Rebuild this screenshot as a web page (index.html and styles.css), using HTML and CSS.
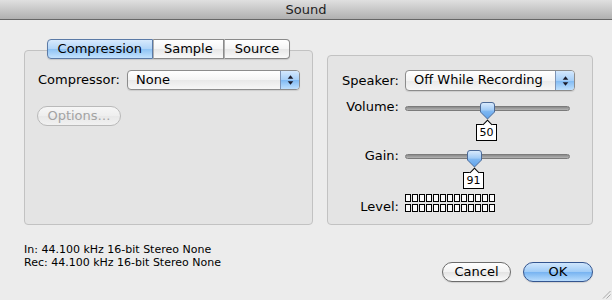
FILE: index.html
```html
<!DOCTYPE html>
<html>
<head>
<meta charset="utf-8">
<link rel="stylesheet" href="styles.css">
</head>
<body>
<div class="window">
  <div class="titlebar">Sound</div>
  <div class="content">
    <div class="panels">
      <div class="left-col">
        <div class="tabs">
          <span class="tab sel">Compression</span><span class="tab">Sample</span><span class="tab">Source</span>
        </div>
        <div class="group left-group">
          <div class="row">
            <span class="plain-label">Compressor:</span>
            <div class="popup popup-comp">
              <span class="popup-label">None</span>
              <span class="stepper"><svg width="7" height="12" viewBox="0 0 7 12"><path d="M3.5 1.2 L6.3 4.8 L0.7 4.8Z" fill="#1b1b2a"/><path d="M0.7 7.2 L6.3 7.2 L3.5 10.8Z" fill="#1b1b2a"/></svg></span>
            </div>
          </div>
          <div class="btn btn-disabled">Options…</div>
        </div>
      </div>
      <div class="group right-group">
        <div class="row">
          <span class="lbl">Speaker:</span>
          <div class="popup popup-speaker">
            <span class="popup-label">Off While Recording</span>
            <span class="stepper"><svg width="7" height="12" viewBox="0 0 7 12"><path d="M3.5 1.2 L6.3 4.8 L0.7 4.8Z" fill="#1b1b2a"/><path d="M0.7 7.2 L6.3 7.2 L3.5 10.8Z" fill="#1b1b2a"/></svg></span>
          </div>
        </div>
        <div class="row slider-row vol-row">
          <span class="lbl lbl-vol">Volume:</span>
          <div class="slider">
            <div class="track"></div>
            <svg class="thumb" style="left:75px" width="15" height="18" viewBox="0 0 15 18"><defs><linearGradient id="tg1" x1="0" y1="0" x2="0" y2="1"><stop offset="0" stop-color="#dcecfd"/><stop offset="0.45" stop-color="#a3ccf6"/><stop offset="0.55" stop-color="#7db6f1"/><stop offset="1" stop-color="#5fa2ea"/></linearGradient></defs><path d="M3 0.5 H12 Q14.5 0.5 14.5 3 V10 L7.5 17 L0.5 10 V3 Q0.5 0.5 3 0.5Z" fill="url(#tg1)" stroke="#4c6a97"/></svg>
            <div class="tag" style="left:71px"><span class="tag-text">50</span></div>
          </div>
        </div>
        <div class="row slider-row gain-row">
          <span class="lbl lbl-gain">Gain:</span>
          <div class="slider">
            <div class="track"></div>
            <svg class="thumb" style="left:62px" width="15" height="18" viewBox="0 0 15 18"><defs><linearGradient id="tg2" x1="0" y1="0" x2="0" y2="1"><stop offset="0" stop-color="#dcecfd"/><stop offset="0.45" stop-color="#a3ccf6"/><stop offset="0.55" stop-color="#7db6f1"/><stop offset="1" stop-color="#5fa2ea"/></linearGradient></defs><path d="M3 0.5 H12 Q14.5 0.5 14.5 3 V10 L7.5 17 L0.5 10 V3 Q0.5 0.5 3 0.5Z" fill="url(#tg2)" stroke="#4c6a97"/></svg>
            <div class="tag" style="left:58px"><span class="tag-text">91</span></div>
          </div>
        </div>
        <div class="row level-row">
          <span class="lbl lbl-level">Level:</span>
          <div class="meter">
            <span class="cell"></span><span class="cell"></span><span class="cell"></span><span class="cell"></span><span class="cell"></span><span class="cell"></span><span class="cell"></span><span class="cell"></span><span class="cell"></span><span class="cell"></span><span class="cell"></span><span class="cell"></span><span class="cell"></span>
            <span class="cell"></span><span class="cell"></span><span class="cell"></span><span class="cell"></span><span class="cell"></span><span class="cell"></span><span class="cell"></span><span class="cell"></span><span class="cell"></span><span class="cell"></span><span class="cell"></span><span class="cell"></span><span class="cell"></span>
          </div>
        </div>
      </div>
    </div>
    <div class="footer">
      <div class="info">In: 44.100 kHz 16-bit Stereo None<br>Rec: 44.100 kHz 16-bit Stereo None</div>
      <div class="buttons">
        <div class="btn btn-cancel">Cancel</div>
        <div class="btn btn-ok">OK</div>
      </div>
    </div>
  </div>
  <svg class="grip" width="10" height="10" viewBox="0 0 10 10"><path d="M9.5 2 L2 9.5 M9.5 5.5 L5.5 9.5" stroke="#a8a8a8" stroke-width="1"/></svg>
</div>
</body>
</html>
```

FILE: styles.css
```css
* { box-sizing: border-box; }
html, body { margin: 0; padding: 0; }
body {
  width: 612px;
  height: 300px;
  overflow: hidden;
  background: #ececec;
  font-family: "DejaVu Sans", sans-serif;
  font-size: 13px;
  color: #000;
}
.window { position: relative; height: 300px; }
.titlebar {
  height: 20px;
  background: linear-gradient(#e0e0e0, #b0b0b0);
  border-bottom: 1px solid #666666;
  text-align: center;
  line-height: 19px;
  color: #1e1e1e;
}
.content { padding: 19px 19px 0 24px; }
.panels { display: flex; gap: 14px; height: 186px; }
.left-col { width: 289px; display: flex; flex-direction: column; }
.tabs {
  align-self: center;
  display: flex;
  height: 20px;
  position: relative;
  z-index: 1;
  box-shadow: 0 1px 1px rgba(0,0,0,0.12);
  border-radius: 4px;
}
.tab {
  padding: 0 10px;
  line-height: 18px;
  border: 1px solid #8a8a8a;
  border-left: 1px solid #b0b0b0;
  background: linear-gradient(#ffffff, #f4f4f4 50%, #e7e7e7 52%, #f9f9f9);
}
.tab:first-child { border-left: 1px solid #8a8a8a; border-radius: 4px 0 0 4px; }
.tab:last-child { border-radius: 0 4px 4px 0; }
.tab.sel {
  background: linear-gradient(#d8eafd, #b0d4f8 50%, #8fc3f4 52%, #c4e3fe);
  border-color: #5b7aa6;
}
.group {
  border: 1px solid #c2c2c2;
  border-radius: 4px;
  background: #e4e4e4;
}
.left-group { flex: 1; margin-top: -9px; padding: 19px 12px 0 13px; }
.right-group { width: 266px; margin-top: 16px; padding: 14px 17px 0 13px; }
.row { display: flex; align-items: center; }
.plain-label { line-height: 14px; white-space: nowrap; }
.popup {
  display: flex;
  height: 20px;
  border: 1px solid #8c8c8c;
  border-radius: 4px;
  overflow: hidden;
  background: linear-gradient(#ffffff, #f4f4f4 50%, #e9e9e9 52%, #f7f7f7);
  box-shadow: 0 1px 1px rgba(0,0,0,0.1);
}
.popup-comp { width: 173px; margin-left: auto; }
.popup-speaker { width: 170px; height: 21px; }
.popup-label { flex: 1; padding-left: 8px; line-height: 18px; white-space: nowrap; }
.stepper {
  width: 19px;
  border-left: 1px solid #7d93b5;
  background: linear-gradient(#d4e8fd, #a6cff8 50%, #80baf3 52%, #bfe0fd);
  display: flex;
  align-items: center;
  justify-content: center;
}
.btn {
  height: 20px;
  border-radius: 10px;
  border: 1px solid #6c6c6c;
  background: linear-gradient(#fefefe, #f2f2f2 50%, #e4e4e4 52%, #fbfbfb);
  text-align: center;
  line-height: 18px;
  box-shadow: 0 1px 1px rgba(0,0,0,0.12);
}
.btn-disabled {
  width: 84px;
  margin: 16px 0 0 -1px;
  border-color: #b9b9b9;
  color: #a3a3a3;
  background: linear-gradient(#f6f6f6, #eeeeee 50%, #e8e8e8 52%, #f1f1f1);
  box-shadow: none;
}
.lbl {
  width: 58px;
  margin-right: 6px;
  flex-shrink: 0;
  text-align: right;
  line-height: 14px;
  white-space: nowrap;
}
.slider-row { align-items: flex-start; }
.vol-row { margin-top: 11px; }
.gain-row { margin-top: 9px; }
.lbl-vol { margin-top: -2px; }
.lbl-gain { margin-top: -1px; }
.slider { position: relative; width: 165px; height: 39px; }
.track {
  margin-top: 4px;
  height: 5px;
  border-radius: 3px;
  border: 1px solid #7b7b7b;
  background: linear-gradient(#8a8a8a, #b4b4b4);
}
.thumb { position: absolute; top: 0; }
.tag {
  position: absolute;
  top: 22px;
  width: 21px;
  height: 17px;
  border: 1px solid #000;
  background: #fff;
  font-size: 11px;
  line-height: 15px;
  text-align: center;
}
.tag::before {
  content: "";
  position: absolute;
  left: 6.5px;
  top: -4px;
  width: 6px;
  height: 6px;
  background: #fff;
  border-left: 1px solid #000;
  border-top: 1px solid #000;
  transform: rotate(45deg);
}
.tag-text { position: relative; }
.level-row { margin-top: 5px; align-items: flex-end; }
.lbl-level { margin-bottom: -2px; }
.meter {
  display: grid;
  grid-template-columns: repeat(13, 6px);
  column-gap: 1px;
  row-gap: 2px;
}
.cell { height: 8px; border: 1px solid #000; background: #fafafa; }
.footer { display: flex; justify-content: space-between; }
.info { margin-top: 18px; font-size: 11px; line-height: 13px; white-space: nowrap; }
.buttons { display: flex; gap: 12px; margin-top: 37px; }
.btn-cancel { width: 69px; }
.btn-ok {
  width: 70px;
  border-color: #34558f;
  background: linear-gradient(#d0e6fc, #9ecbf7 50%, #78b4f1 52%, #b8dcfd);
}
.grip { position: absolute; right: 1px; bottom: 1px; }
```
